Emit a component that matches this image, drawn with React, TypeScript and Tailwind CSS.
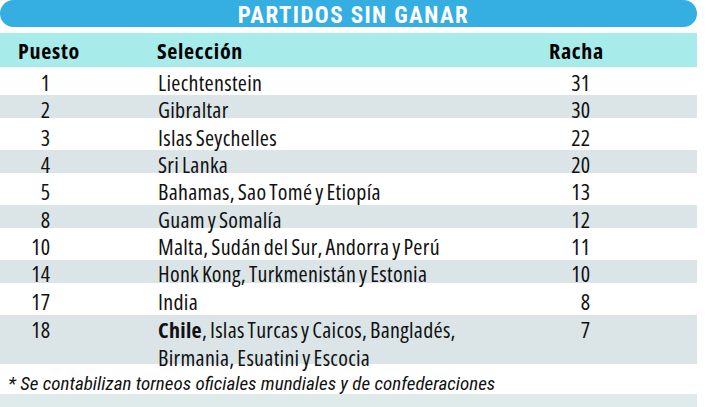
const rows: { pos: string; name: React.ReactNode; racha: string }[] = [
  { pos: '1', name: 'Liechtenstein', racha: '31' },
  { pos: '2', name: 'Gibraltar', racha: '30' },
  { pos: '3', name: 'Islas Seychelles', racha: '22' },
  { pos: '4', name: 'Sri Lanka', racha: '20' },
  { pos: '5', name: 'Bahamas, Sao Tomé y Etiopía', racha: '13' },
  { pos: '8', name: 'Guam y Somalía', racha: '12' },
  { pos: '10', name: 'Malta, Sudán del Sur, Andorra y Perú', racha: '11' },
  { pos: '14', name: 'Honk Kong, Turkmenistán y Estonia', racha: '10' },
  { pos: '17', name: 'India', racha: '8' },
];

function Row({
  pos,
  name,
  racha,
  cls,
}: {
  pos: string;
  name: React.ReactNode;
  racha: string;
  cls: string;
}) {
  return (
    <div className={`flex items-start leading-[18px] ${cls}`}>
      <div className="w-[50px] text-right">{pos}</div>
      <div className="w-[490px] pl-[108px] tracking-[0.3px] [word-spacing:-1.5px]">{name}</div>
      <div className="w-[50px] text-right">{racha}</div>
    </div>
  );
}

export default function App() {
  return (
    <div
      className="w-[715px] h-[407px] overflow-hidden bg-white text-[#111111] text-[22px] [font-stretch:75%]"
      style={{ fontFamily: '"Open Sans", "Noto Sans", sans-serif' }}
    >
      <div className="w-[697px]">
        <div className="h-[27px] rounded-full bg-[#35aee1] flex items-center justify-center pl-[10px] pt-[4px]">
          <span
            className="text-white font-bold text-[23px] leading-[22px] tracking-[1.4px] [font-stretch:100%]"
            style={{ fontFamily: '"Roboto Condensed", "Open Sans", sans-serif' }}
          >
            PARTIDOS SIN GANAR
          </span>
        </div>
        <div className="h-[6px]" />
        <div className="h-[34px] bg-[#a8ebeb] flex items-start pt-[8px] leading-[18px] font-bold text-black tracking-[0.7px]">
          <div className="w-[157px] pl-[18px]">Puesto</div>
          <div className="w-[392px]">Selección</div>
          <div>Racha</div>
        </div>
        <Row {...rows[0]} cls="h-[28px] pt-[6px]" />
        <Row {...rows[1]} cls="h-[23px] pt-[5px] bg-[#dbe5e8]" />
        <Row {...rows[2]} cls="h-[32px] pt-[10px]" />
        <Row {...rows[3]} cls="h-[23px] pt-[5px] bg-[#dbe5e8]" />
        <Row {...rows[4]} cls="h-[32px] pt-[9px]" />
        <Row {...rows[5]} cls="h-[23px] pt-[5px] bg-[#dbe5e8]" />
        <Row {...rows[6]} cls="h-[32px] pt-[9px]" />
        <Row {...rows[7]} cls="h-[23px] pt-[4px] bg-[#dbe5e8]" />
        <Row {...rows[8]} cls="h-[32px] pt-[9px]" />
        <div className="flex items-start h-[49px] pt-[1px] leading-[27.5px] bg-[#dbe5e8]">
          <div className="w-[50px] text-right">18</div>
          <div className="w-[490px] pl-[108px] tracking-[0.3px] [word-spacing:-1.5px]">
            <span className="font-bold">Chile</span>, Islas Turcas y Caicos, Bangladés,
            <br />
            Birmania, Esuatini y Escocia
          </div>
          <div className="w-[50px] text-right">7</div>
        </div>
        <div
          className="h-[30px] pt-[11px] pl-[8px] leading-[18px] italic text-[19px] [font-stretch:100%]"
          style={{ fontFamily: '"Roboto Condensed", "Open Sans", sans-serif' }}
        >
          * Se contabilizan torneos oficiales mundiales y de confederaciones
        </div>
        <div className="h-[13px] bg-[#dfeaea]" />
      </div>
    </div>
  );
}
